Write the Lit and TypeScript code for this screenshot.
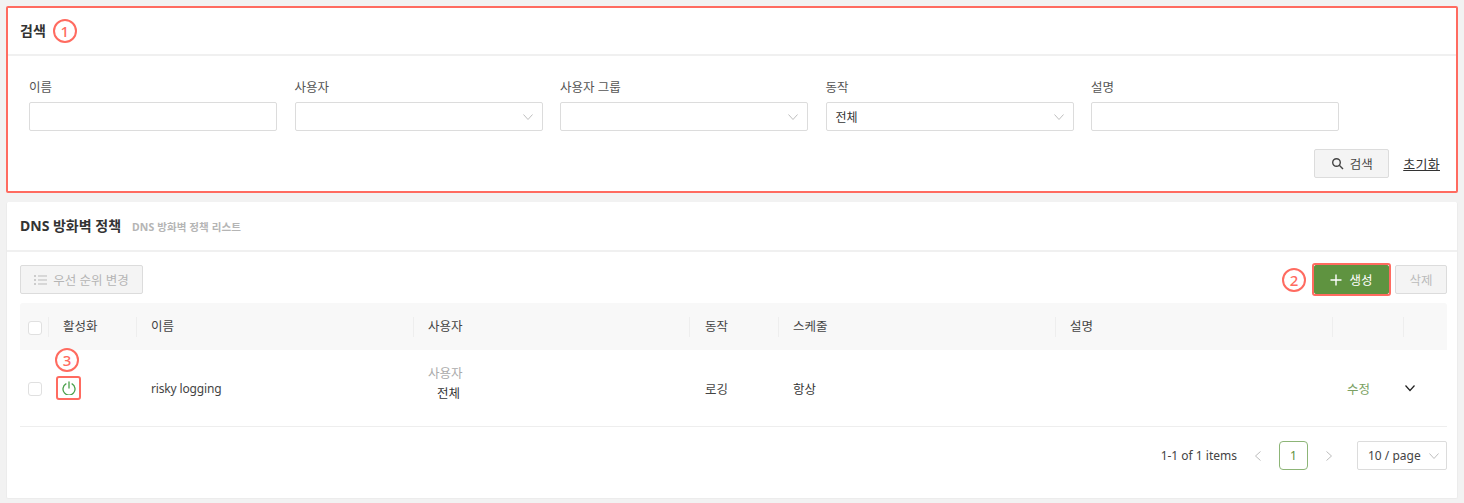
import { LitElement, html, css, svg } from "lit";
import { customElement } from "lit/decorators.js";

const chevron = svg`<svg class="chev" width="12" height="12" viewBox="0 0 12 12" fill="none" stroke="currentColor" stroke-width="1"><path d="M1.5 3.5 6 8.5l4.5-5"/></svg>`;

@customElement("app-root")
export class AppRoot extends LitElement {
  static styles = css`
    :host { display: block; width: 1464px; height: 503px; overflow: hidden; background: #f2f2f2; box-sizing: border-box; padding: 6px 6px 0; font-family: "Noto Sans", "Noto Sans CJK KR", sans-serif; font-size: 12.5px; color: #333; }
    * { box-sizing: border-box; }
    .card { background: #fff; border-radius: 2px; position: relative; }
    .search { height: 187px; border: 2px solid #ff6b60; }
    .search .head { height: 48px; padding: 0 12px; border-bottom: 2px solid #f0f0f0; display: flex; align-items: center; gap: 7px; }
    .title { font-size: 14px; font-weight: 700; color: #333; line-height: 20px; }
    .badge { width: 24px; height: 24px; border-radius: 50%; border: 2px solid #ff6b60; background: #fff; color: #ff6b60; font: 500 15px/20px "Noto Sans", sans-serif; display: flex; align-items: center; justify-content: center; flex: none; }
    .fields { display: flex; gap: 17.5px; padding: 22px 0 0 21px; }
    .field { width: 248px; }
    .field label { display: block; height: 24px; padding-top: 1px; line-height: 18px; font-size: 12.5px; color: #555; }
    .input { height: 29px; border: 1px solid #dcdcdc; border-radius: 2px; background: #fff; display: flex; align-items: center; justify-content: space-between; padding: 0 8px 0 9px; color: #333; font-size: 12px; }
    .chev { color: #bfbfbf; flex: none; }
    .search-actions { display: flex; justify-content: flex-end; align-items: center; gap: 14px; padding: 18px 16px 0 0; }
    .btn { height: 29px; border: 1px solid #dcdcdc; border-radius: 2px; background: #f4f4f4; display: inline-flex; align-items: center; justify-content: center; gap: 6px; color: #444; font-size: 12.5px; white-space: nowrap; }
    .btn-search { width: 75px; }
    .reset { font-size: 13px; letter-spacing: 0.3px; color: #333; text-decoration: underline; }
    .policy { height: 297px; margin-top: 9px; border: 1px solid #ececec; border-top: none; }
    .policy .head { height: 50px; padding: 0 13px; border-bottom: 2px solid #f0f0f0; display: flex; align-items: center; gap: 11px; }
    .sub { font-size: 10.5px; font-weight: 700; color: #b5b5b5; letter-spacing: 0.1px; }
    .body { padding: 13px 10px 0 13px; }
    .toolbar { display: flex; align-items: center; height: 29px; }
    .btn-prio { width: 123px; color: #b5b5b5; gap: 6px; }
    .spacer { flex: 1; }
    .create-wrap { border: 2px solid #ff6b60; border-radius: 3px; margin-right: 4px; height: 33px; width: 79px; flex: none; }
    .btn-create { width: 100%; height: 100%; background: #5f9340; border: 1px solid #5f9340; color: #fff; gap: 7px; }
    .btn-del { width: 52px; color: #bbb; }
    .badge-2 { margin-right: 6px; }
    .table { margin-top: 9px; position: relative; }
    .row { display: grid; grid-template-columns: 28px 88px 277px 276px 89px 277px 277px 71px 44px; align-items: center; }
    .thead { height: 47px; background: #f8f8f8; border-radius: 3px 3px 0 0; }
    .th { height: 20px; line-height: 20px; padding-left: 14px; border-left: 1px solid #eee; font-size: 12.5px; color: #444; }
    .th:first-child { border-left: none; padding-left: 8px; display: flex; align-items: center; }
    .th .check { margin-top: 2px; }
    .th.action-th { padding-left: 15px; }
    .check { width: 14px; height: 14px; border: 1px solid #e0e0e0; border-radius: 3px; background: #fff; flex: none; }
    .tbody { height: 77px; border-bottom: 1px solid #eee; }
    .td { padding-left: 15px; font-size: 12.5px; color: #444; }
    .td:first-child { padding-left: 8px; padding-top: 2px; }
    .td.power { padding-left: 8px; position: relative; }
    .power-box { width: 25px; height: 24px; border: 2px solid #ff6b60; border-radius: 3px; display: flex; align-items: center; justify-content: center; }
    .badge-3 { position: absolute; left: 7px; top: -28px; }
    .name { font-size: 12px; letter-spacing: -0.15px; }
    .user { line-height: 20px; margin-bottom: 9px; }
    .user .k { color: #aaa; }
    .user .v { color: #333; padding-left: 9px; }
    .action { padding-left: 16px; }
    .dark { color: #333; }
    .edit { color: #7a9f62; padding-left: 15px; }
    .toggle { color: #222; padding-left: 1px; display: flex; }
    .toggle .chev { color: #222; }
    .pager { display: flex; justify-content: flex-end; align-items: center; height: 29px; margin-top: 14px; font-size: 12px; color: #444; }
    .pager .nav { color: #bdbdbd; display: flex; }
    .page-1 { width: 29px; height: 29px; border: 1px solid #8db577; border-radius: 4px; display: flex; align-items: center; justify-content: center; color: #5f9340; margin: 0 15px; }
    .size { width: 90px; height: 29px; border: 1px solid #dcdcdc; border-radius: 2px; display: flex; align-items: center; justify-content: space-between; padding: 0 6px 0 10px; margin-left: 22px; }
    .items { margin-right: 15px; }
  `;

  render() {
    return html`
      <section class="card search">
        <div class="head"><span class="title">검색</span><span class="badge">1</span></div>
        <div class="fields">
          <div class="field"><label>이름</label><div class="input"></div></div>
          <div class="field"><label>사용자</label><div class="input"><span></span>${chevron}</div></div>
          <div class="field"><label>사용자 그룹</label><div class="input"><span></span>${chevron}</div></div>
          <div class="field"><label>동작</label><div class="input"><span>전체</span>${chevron}</div></div>
          <div class="field"><label>설명</label><div class="input"></div></div>
        </div>
        <div class="search-actions">
          <span class="btn btn-search">
            <svg width="13" height="13" viewBox="0 0 13 13" fill="none" stroke="#444" stroke-width="1.4"><circle cx="5.5" cy="5.5" r="3.8"/><path d="M8.3 8.3 12 12"/></svg>
            검색
          </span>
          <span class="reset">초기화</span>
        </div>
      </section>
      <section class="card policy">
        <div class="head"><span class="title">DNS 방화벽 정책</span><span class="sub">DNS 방화벽 정책 리스트</span></div>
        <div class="body">
          <div class="toolbar">
            <span class="btn btn-prio">
              <svg width="13" height="12" viewBox="0 0 13 12" fill="none" stroke="#bbb" stroke-width="1"><path d="M4 2h9M4 6h9M4 10h9"/><path d="M1 1v2M1 5v2M1 9v2" stroke-width="1.4"/></svg>
              우선 순위 변경
            </span>
            <span class="spacer"></span>
            <span class="badge badge-2">2</span>
            <span class="create-wrap">
              <span class="btn btn-create">
                <svg width="12" height="12" viewBox="0 0 12 12" fill="none" stroke="#fff" stroke-width="1.4"><path d="M6 .5v11M.5 6h11"/></svg>
                생성
              </span>
            </span>
            <span class="btn btn-del">삭제</span>
          </div>
          <div class="table">
            <div class="row thead">
              <div class="th"><div class="check"></div></div>
              <div class="th">활성화</div>
              <div class="th">이름</div>
              <div class="th">사용자</div>
              <div class="th action-th">동작</div>
              <div class="th">스케줄</div>
              <div class="th">설명</div>
              <div class="th"></div>
              <div class="th"></div>
            </div>
            <div class="row tbody">
              <div class="td"><div class="check"></div></div>
              <div class="td power">
                <span class="badge badge-3">3</span>
                <div class="power-box">
                  <svg width="14" height="14" viewBox="0 0 14 14" fill="none" stroke="#4aa04a" stroke-width="1.3" stroke-linecap="round"><path d="M7 1v6"/><path d="M3.9 2.9a6 6 0 1 0 6.2 0"/></svg>
                </div>
              </div>
              <div class="td name">risky logging</div>
              <div class="td user"><div class="k">사용자</div><div class="v">전체</div></div>
              <div class="td action">로깅</div>
              <div class="td dark">항상</div>
              <div class="td"></div>
              <div class="td edit">수정</div>
              <div class="td toggle">
                <svg class="chev" width="12" height="12" viewBox="0 0 12 12" fill="none" stroke="currentColor" stroke-width="1.2"><path d="M1.5 3.5 6 8.5l4.5-5"/></svg>
              </div>
            </div>
          </div>
          <div class="pager">
            <span class="items">1-1 of 1 items</span>
            <span class="nav"><svg width="12" height="12" viewBox="0 0 12 12" fill="none" stroke="currentColor"><path d="M8.5 1.5 3.5 6l5 4.5"/></svg></span>
            <span class="page-1">1</span>
            <span class="nav"><svg width="12" height="12" viewBox="0 0 12 12" fill="none" stroke="currentColor"><path d="M3.5 1.5 8.5 6l-5 4.5"/></svg></span>
            <span class="size"><span>10 / page</span>${chevron}</span>
          </div>
        </div>
      </section>
    `;
  }
}
